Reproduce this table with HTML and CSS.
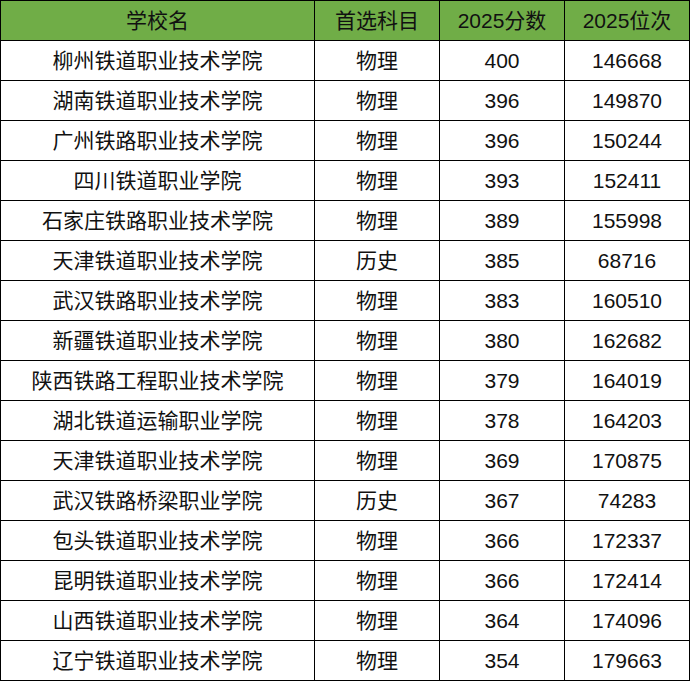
FILE: index.html
```html
<!DOCTYPE html>
<html lang="zh">
<head>
<meta charset="utf-8">
<link rel="stylesheet" href="styles.css">
</head>
<body>
<div class="table">
  <div class="cell head">学校名</div><div class="cell head">首选科目</div><div class="cell head">2025分数</div><div class="cell head">2025位次</div>
  <div class="cell">柳州铁道职业技术学院</div><div class="cell">物理</div><div class="cell">400</div><div class="cell">146668</div>
  <div class="cell">湖南铁道职业技术学院</div><div class="cell">物理</div><div class="cell">396</div><div class="cell">149870</div>
  <div class="cell">广州铁路职业技术学院</div><div class="cell">物理</div><div class="cell">396</div><div class="cell">150244</div>
  <div class="cell">四川铁道职业学院</div><div class="cell">物理</div><div class="cell">393</div><div class="cell">152411</div>
  <div class="cell">石家庄铁路职业技术学院</div><div class="cell">物理</div><div class="cell">389</div><div class="cell">155998</div>
  <div class="cell">天津铁道职业技术学院</div><div class="cell">历史</div><div class="cell">385</div><div class="cell">68716</div>
  <div class="cell">武汉铁路职业技术学院</div><div class="cell">物理</div><div class="cell">383</div><div class="cell">160510</div>
  <div class="cell">新疆铁道职业技术学院</div><div class="cell">物理</div><div class="cell">380</div><div class="cell">162682</div>
  <div class="cell">陕西铁路工程职业技术学院</div><div class="cell">物理</div><div class="cell">379</div><div class="cell">164019</div>
  <div class="cell">湖北铁道运输职业学院</div><div class="cell">物理</div><div class="cell">378</div><div class="cell">164203</div>
  <div class="cell">天津铁道职业技术学院</div><div class="cell">物理</div><div class="cell">369</div><div class="cell">170875</div>
  <div class="cell">武汉铁路桥梁职业学院</div><div class="cell">历史</div><div class="cell">367</div><div class="cell">74283</div>
  <div class="cell">包头铁道职业技术学院</div><div class="cell">物理</div><div class="cell">366</div><div class="cell">172337</div>
  <div class="cell">昆明铁道职业技术学院</div><div class="cell">物理</div><div class="cell">366</div><div class="cell">172414</div>
  <div class="cell">山西铁道职业技术学院</div><div class="cell">物理</div><div class="cell">364</div><div class="cell">174096</div>
  <div class="cell">辽宁铁道职业技术学院</div><div class="cell">物理</div><div class="cell">354</div><div class="cell">179663</div>
</div>
</body>
</html>
```
FILE: styles.css
```css
html, body {
  margin: 0;
  padding: 0;
  background: #ffffff;
}
.table {
  display: grid;
  grid-template-columns: 313px 124px 124px 124px;
  grid-auto-rows: 39px;
  gap: 1px;
  padding: 1px;
  background: #000000;
  width: 688px;
  font-family: "Liberation Sans", "Noto Sans CJK SC", sans-serif;
  font-size: 21px;
  line-height: 1;
  color: #111111;
}
.cell {
  background: #ffffff;
  display: flex;
  align-items: center;
  justify-content: center;
  white-space: nowrap;
}
.cell.head {
  background: #70ad47;
}
```
